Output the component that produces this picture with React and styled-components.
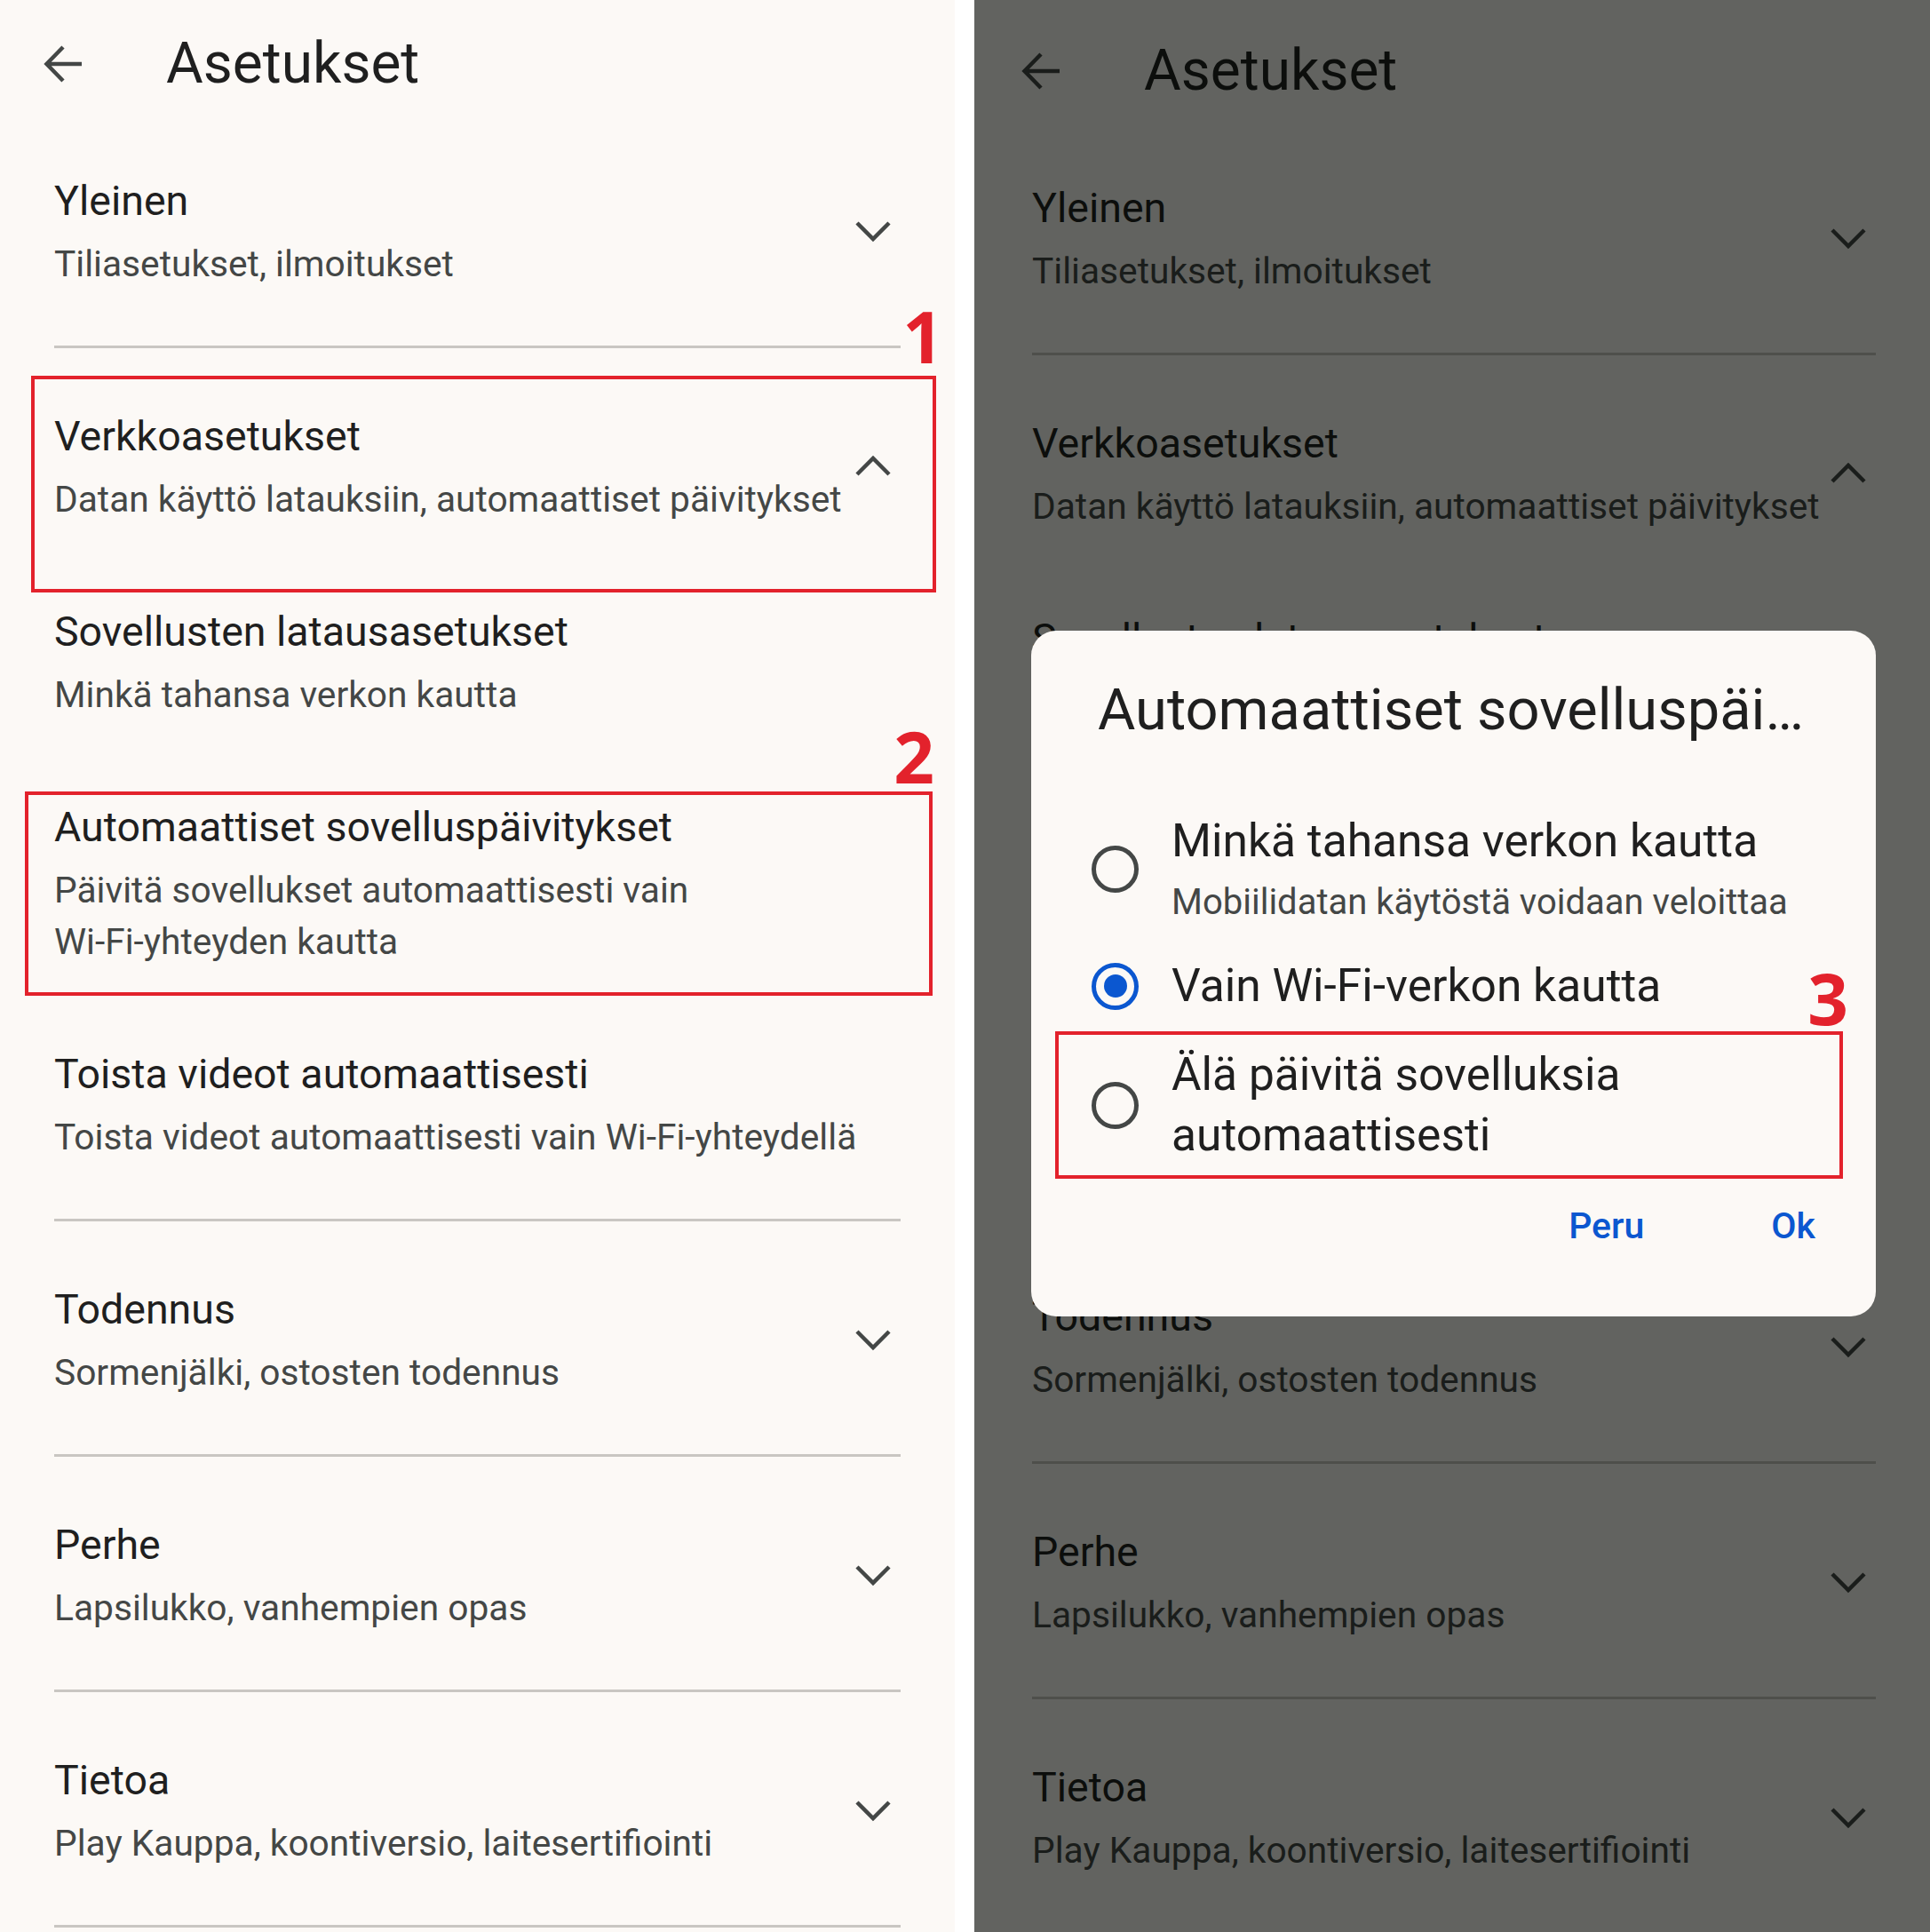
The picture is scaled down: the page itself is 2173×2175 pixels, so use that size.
import React from 'react';
import styled, { createGlobalStyle } from 'styled-components';

const GlobalStyle = createGlobalStyle`
  html, body {
    margin: 0;
    padding: 0;
    background: #ffffff;
  }
  body {
    font-family: Roboto, "Noto Sans", sans-serif;
  }
  * {
    box-sizing: border-box;
  }
`;

// sisältö: samat ryhmät molemmissa näkymissä
const groups = [
  { title: 'Yleinen', subtitle: 'Tiliasetukset, ilmoitukset' },
  {
    title: 'Verkkoasetukset',
    subtitle: 'Datan käyttö latauksiin, automaattiset päivitykset',
    open: true,
    mark: { n: 1, inset: '-36px -40px -76px -26px', lift: 9, right: -12 },
    items: [
      { title: 'Sovellusten latausasetukset', subtitle: 'Minkä tahansa verkon kautta' },
      {
        title: 'Automaattiset sovelluspäivitykset',
        subtitle: 'Päivitä sovellukset automaattisesti vain\nWi-Fi-yhteyden kautta',
        mark: { n: 2, inset: '-8px -36px -32px -33px', lift: 4, right: -6 },
      },
      { title: 'Toista videot automaattisesti', subtitle: 'Toista videot automaattisesti vain Wi-Fi-yhteydellä' },
    ],
  },
  { title: 'Todennus', subtitle: 'Sormenjälki, ostosten todennus' },
  { title: 'Perhe', subtitle: 'Lapsilukko, vanhempien opas' },
  { title: 'Tietoa', subtitle: 'Play Kauppa, koontiversio, laitesertifiointi' },
];

const options = [
  { label: 'Minkä tahansa verkon kautta', hint: 'Mobiilidatan käytöstä voidaan veloittaa' },
  { label: 'Vain Wi-Fi-verkon kautta', checked: true },
  { label: 'Älä päivitä sovelluksia\nautomaattisesti', mark: true },
];

const BackArrow = () => (
  <BackIcon width="46" height="46" viewBox="0 0 46 46" aria-hidden="true">
    <path d="M44 23H5M23 4L4.5 23L23 42" fill="none" stroke="currentColor" strokeWidth="4.5" />
  </BackIcon>
);

const Chevron = ({ up }) => (
  <ChevronBox>
    <svg width="44" height="28" viewBox="0 0 44 28" aria-hidden="true">
      <polyline
        points={up ? '4,23 22,5 40,23' : '4,5 22,23 40,5'}
        fill="none"
        stroke="currentColor"
        strokeWidth="4.5"
      />
    </svg>
  </ChevronBox>
);

const Mark = ({ mark }) => (
  <Frame $inset={mark.inset}>
    <Badge $lift={mark.lift} $right={mark.right}>{mark.n}</Badge>
  </Frame>
);

const SettingsScreen = ({ marked, shiftX = 0, shiftY = 0 }) => (
  <Screen $shiftX={shiftX} $shiftY={shiftY}>
    <Header>
      <BackArrow />
      <ScreenTitle>Asetukset</ScreenTitle>
    </Header>
    <List>
      {groups.map((g) => (
        <Group key={g.title}>
          <Row>
            <TextBlock>
              <Title>{g.title}</Title>
              <Subtitle>{g.subtitle}</Subtitle>
            </TextBlock>
            <Chevron up={g.open} />
            {marked && g.mark && <Mark mark={g.mark} />}
          </Row>
          {g.open &&
            g.items.map((it) => (
              <SubItem key={it.title}>
                <Title>{it.title}</Title>
                <Subtitle>{it.subtitle}</Subtitle>
                {marked && it.mark && <Mark mark={it.mark} />}
              </SubItem>
            ))}
        </Group>
      ))}
    </List>
  </Screen>
);

const UpdateDialog = () => (
  <Dialog role="dialog">
    <DialogTitle>Automaattiset sovelluspäivitykset</DialogTitle>
    <Options>
      {options.map((o) => (
        <Option key={o.label}>
          <Radio $checked={o.checked} />
          <div>
            <OptionLabel>{o.label}</OptionLabel>
            {o.hint && <OptionHint>{o.hint}</OptionHint>}
          </div>
          {o.mark && <Mark mark={{ n: 3, inset: '0', lift: 2, right: -10 }} />}
        </Option>
      ))}
    </Options>
    <Actions>
      <TextButton>Peru</TextButton>
      <TextButton>Ok</TextButton>
    </Actions>
  </Dialog>
);

export default function App() {
  return (
    <>
      <GlobalStyle />
      <Page>
        <Panel $width={1075}>
          <SettingsScreen marked />
        </Panel>
        <Panel $width={1076}>
          <SettingsScreen shiftX={4} shiftY={8} />
          <Scrim>
            <UpdateDialog />
          </Scrim>
        </Panel>
      </Page>
    </>
  );
}

const Page = styled.div`
  display: flex;
  gap: 22px;
  width: 2173px;
  height: 2175px;
  background: #ffffff;
  overflow: hidden;
`;

const Panel = styled.section`
  position: relative;
  flex: 0 0 ${(p) => p.$width}px;
  height: 100%;
  overflow: hidden;
  background: #fcf9f6;
`;

const Screen = styled.div`
  padding: ${(p) => p.$shiftY}px 0 0 ${(p) => p.$shiftX}px;
`;

const Header = styled.header`
  display: flex;
  align-items: center;
  height: 144px;
  padding-left: 48px;
`;

const BackIcon = styled.svg`
  flex: none;
  color: #444746;
`;

const ScreenTitle = styled.h1`
  margin: 0 0 0 93px;
  font: 400 64px/80px Roboto, sans-serif;
  color: #1f1f1f;
`;

const List = styled.div`
  padding: 0 61px;
`;

const Group = styled.div`
  padding: 67px 0 63px;
  border-bottom: 3px solid #c9c6c2;

  &:first-child {
    padding-top: 50px;
  }
`;

const Row = styled.div`
  position: relative;
  display: flex;
  align-items: center;
`;

const TextBlock = styled.div`
  flex: 1;
  min-width: 0;
`;

const Title = styled.div`
  font-size: 46.5px;
  line-height: 64px;
  color: #1f1f1f;
  white-space: nowrap;
`;

const Subtitle = styled.div`
  margin-top: 10px;
  font-size: 40.7px;
  line-height: 58px;
  color: #444746;
  white-space: pre;
`;

const SubItem = styled.div`
  position: relative;
  margin-top: 88px;
`;

const ChevronBox = styled.div`
  flex: none;
  display: flex;
  margin-right: 9px;
  color: #444746;
`;

const Frame = styled.div`
  position: absolute;
  inset: ${(p) => p.$inset};
  border: 4px solid #e3222c;
  pointer-events: none;
`;

const Badge = styled.span`
  position: absolute;
  right: ${(p) => p.$right}px;
  bottom: calc(100% + ${(p) => p.$lift}px);
  font: 700 80px/80px "Open Sans", sans-serif;
  color: #e3222c;
`;

const Scrim = styled.div`
  position: absolute;
  inset: 0;
  display: flex;
  align-items: flex-start;
  padding: 710px 61px 0 64px;
  background: rgba(0, 3, 0, 0.61);
`;

const Dialog = styled.div`
  flex: 1;
  min-width: 0;
  padding: 49px 0 74px;
  border-radius: 28px;
  background: #fcf9f6;
`;

const DialogTitle = styled.h2`
  margin: 0 70px 0 75px;
  font: 400 65px/80px Roboto, sans-serif;
  color: #1f1f1f;
  white-space: nowrap;
  overflow: hidden;
  text-overflow: ellipsis;
`;

const Options = styled.div`
  display: flex;
  flex-direction: column;
  gap: 2px;
  margin: 59px 37px 0 27px;
`;

const Option = styled.div`
  position: relative;
  display: flex;
  align-items: center;
  padding: 15px 0 15px 41px;
`;

const Radio = styled.span`
  flex: none;
  display: flex;
  align-items: center;
  justify-content: center;
  width: 53px;
  height: 53px;
  margin-right: 37px;
  border: 5px solid ${(p) => (p.$checked ? '#0b57d0' : '#444746')};
  border-radius: 50%;

  &::after {
    content: '';
    display: ${(p) => (p.$checked ? 'block' : 'none')};
    width: 26px;
    height: 26px;
    border-radius: 50%;
    background: #0b57d0;
  }
`;

const OptionLabel = styled.div`
  font-size: 51.5px;
  line-height: 68px;
  color: #1f1f1f;
  white-space: pre;
`;

const OptionHint = styled.div`
  margin-top: 7px;
  font-size: 40px;
  line-height: 56px;
  color: #444746;
  white-space: nowrap;
`;

const Actions = styled.div`
  display: flex;
  justify-content: flex-end;
  gap: 143px;
  margin-top: 25px;
  padding-right: 68px;
`;

const TextButton = styled.button`
  padding: 0;
  border: 0;
  background: none;
  font: 500 41px/56px Roboto, sans-serif;
  color: #0b57d0;
  cursor: pointer;
`;
